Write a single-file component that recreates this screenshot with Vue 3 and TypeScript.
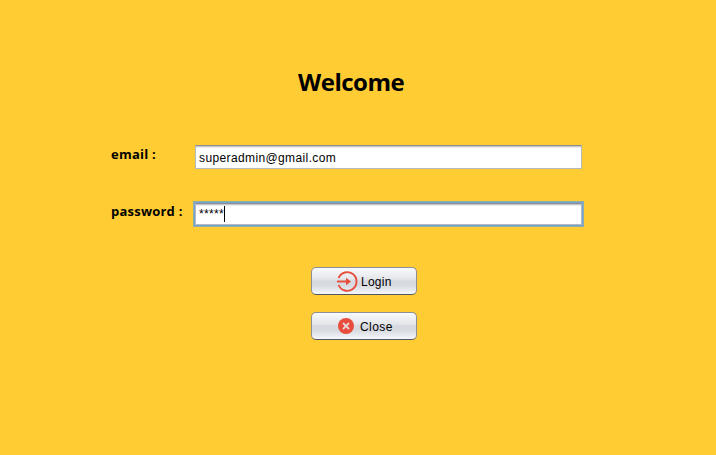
<script setup lang="ts">
import { ref } from 'vue'

const email = ref<string>('superadmin@gmail.com')
const password = ref<string>('*****')
</script>

<template>
  <main class="window">
    <h1 class="title">Welcome</h1>
    <div class="row row-email">
      <span class="label">email :</span>
      <div class="field"><span class="value">{{ email }}</span></div>
    </div>
    <div class="row row-password">
      <span class="label label-password">password :</span>
      <div class="field focused"><span class="stars">{{ password }}</span><i class="caret"></i></div>
    </div>
    <div class="actions">
      <button class="btn" type="button">
        <svg class="icon-login" width="21" height="21" viewBox="0 0 21 21" fill="none" stroke="#e74c3c">
          <path d="M1.6 7A9.3 9.3 0 1 1 1.6 14" stroke-width="1.9" />
          <path d="M0 10.5h10" stroke-width="1.9" />
          <path d="M9 6.8l5 3.7-5 3.7z" fill="#e74c3c" stroke="none" />
        </svg>
        <span class="text-login">Login</span>
      </button>
      <button class="btn" type="button">
        <svg class="icon-close" width="16" height="16" viewBox="0 0 16 16">
          <circle cx="8" cy="8" r="8" fill="#e74c3c" />
          <path d="M5 5l6 6M11 5l-6 6" stroke="#ecd5d6" stroke-width="1.8" />
        </svg>
        <span class="text-close">Close</span>
      </button>
    </div>
  </main>
</template>

<style>
body {
  margin: 0;
}
</style>

<style scoped>
.window {
  box-sizing: border-box;
  width: 716px;
  height: 455px;
  padding-top: 65px;
  overflow: hidden;
  background: #ffcc33;
  color: #000;
  font-family: "Liberation Sans", Arial, sans-serif;
  font-size: 12px;
}
.title {
  margin: 0 0 0 298px;
  height: 34px;
  font: bold 24px/34px "Open Sans", "Noto Sans", sans-serif;
  letter-spacing: -0.5px;
}
.row {
  display: flex;
  align-items: flex-start;
  padding-left: 111px;
}
.row-email {
  margin-top: 46px;
}
.row-password {
  margin-top: 34px;
}
.label {
  width: 84px;
  padding-top: 1px;
  white-space: nowrap;
  font: bold 13px/17px "Open Sans", "Noto Sans", sans-serif;
  letter-spacing: 0.22px;
}
.label-password {
  padding-top: 0;
}
.field {
  box-sizing: border-box;
  display: flex;
  align-items: center;
  width: 387px;
  height: 24px;
  padding: 2px 0 0 3px;
  border: 1px solid #b4b8bf;
  border-top-color: #8d8e91;
  background: #fff;
  box-shadow: inset 0 1px #c7c7ca, inset 0 2px #ececee;
}
.focused {
  height: 22px;
  padding-top: 0;
  box-shadow: 0 0 0 1px #73a4d1, 0 0 0 2px #8fadae, inset 0 1px #c7c7ca, inset 0 2px #ececee;
}
.value {
  letter-spacing: 0.38px;
}
.stars {
  letter-spacing: 0.33px;
}
.caret {
  width: 1px;
  height: 16px;
  background: #000;
}
.actions {
  display: flex;
  flex-direction: column;
  gap: 17px;
  width: 106px;
  margin: 42px 0 0 311px;
}
.btn {
  box-sizing: border-box;
  display: flex;
  align-items: center;
  width: 106px;
  height: 28px;
  padding: 0 0 0 25px;
  border: 1px solid #8b8f98;
  border-bottom-color: #525660;
  border-radius: 5px;
  background: linear-gradient(#f9fafb, #e4e6ea 42%, #d6d9df 50%, #d8dbe1 68%, #f5f7fb);
  color: #000;
  font: 12px/14px "Liberation Sans", Arial, sans-serif;
}
.icon-close {
  margin-left: 1px;
}
.text-login {
  margin: 2px 0 0 3px;
  letter-spacing: 0.25px;
}
.text-close {
  margin: 2px 0 0 6px;
  letter-spacing: 0.45px;
}
</style>
